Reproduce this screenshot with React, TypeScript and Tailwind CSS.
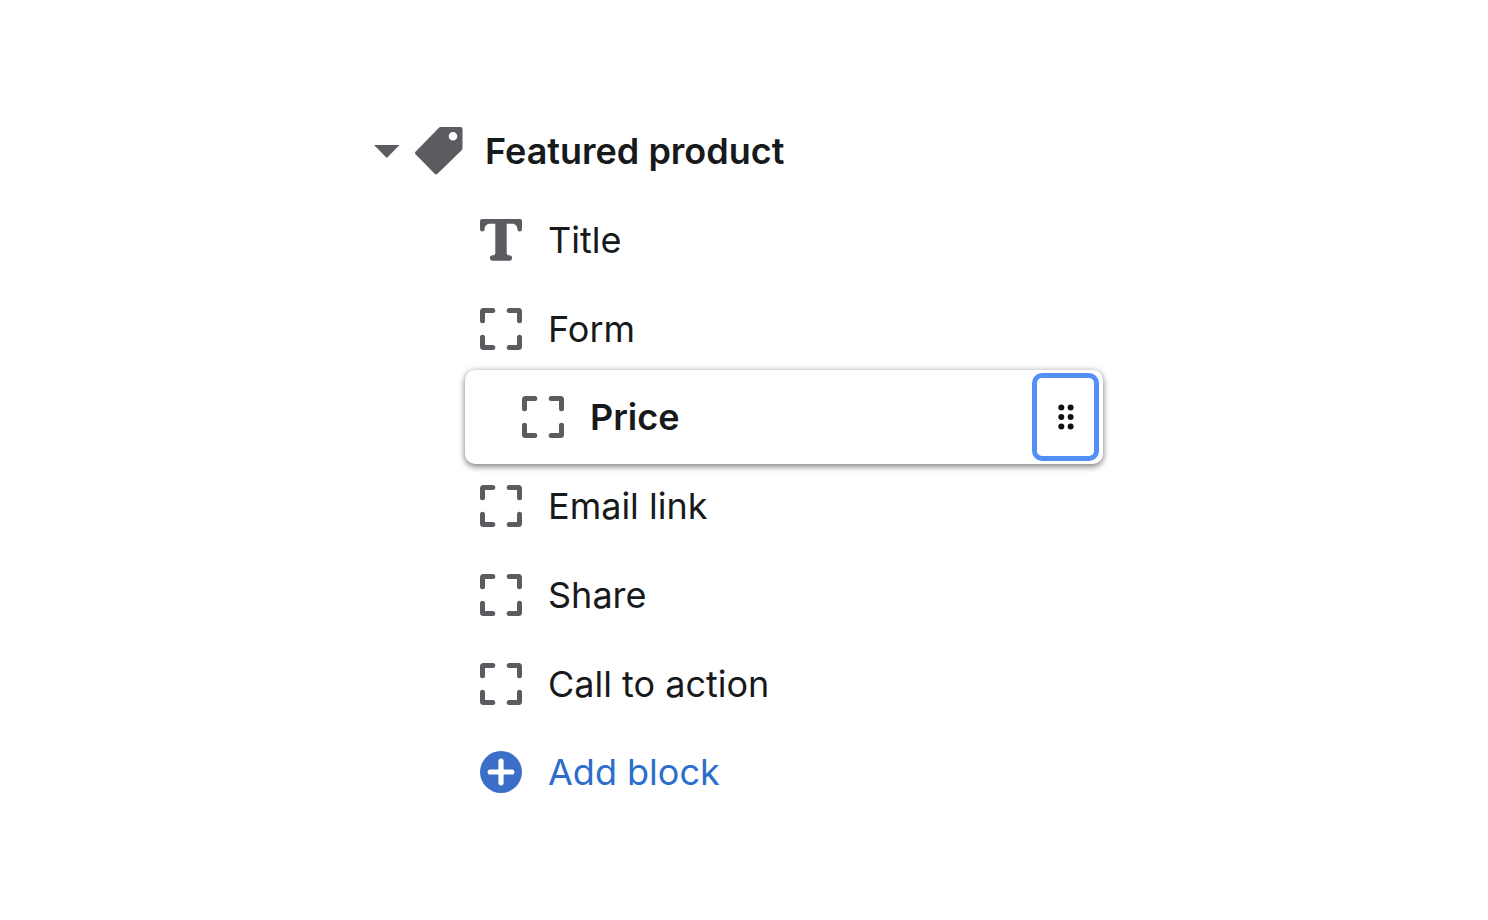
import { useState } from "react";

type Block = {
  label: string;
  icon: "text" | "block";
  selected?: boolean;
};

const blocks: Block[] = [
  { label: "Title", icon: "text" },
  { label: "Form", icon: "block" },
  { label: "Price", icon: "block", selected: true },
  { label: "Email link", icon: "block" },
  { label: "Share", icon: "block" },
  { label: "Call to action", icon: "block" },
];

function CaretIcon({ open }: { open: boolean }) {
  return (
    <svg
      viewBox="0 0 26 14"
      aria-hidden="true"
      className={open ? "w-[26px] h-[14px]" : "w-[26px] h-[14px] -rotate-90"}
    >
      <path d="M0 1h25.5L12.800 14z" fill="#5b5c60" />
    </svg>
  );
}

function TagIcon() {
  return (
    <svg viewBox="0 0 48 48" aria-hidden="true" className="size-12">
      <path
        fillRule="evenodd"
        fill="#5b5c60"
        d="M25.6 0H45.6a1.9 1.9 0 0 1 1.9 1.9V21.600a2 2 0 0 1-.6 1.4L22.5 46.8a2 2 0 0 1-2.8 0L.7 27.4a2 2 0 0 1 0-2.8L24.2.6a2 2 0 0 1 1.4-.6ZM38 5a4.3 4.3 0 1 0 0 8.6A4.3 4.3 0 0 0 38 5Z"
      />
    </svg>
  );
}

function TextIcon() {
  return (
    <svg viewBox="0 0 42 42" aria-hidden="true" className="size-[42px] shrink-0">
      <path
        fill="#5b5c60"
        d="M2 0h38a2 2 0 0 1 2 2v8.200a2.300 2.300 0 0 1-4.600 0C37.200 6.800 35.200 4.800 31.500 4.800H26.700v28.700c0 2 .8 2.800 2.600 2.800a2.700 2.700 0 0 1 0 5.500H12.700a2.700 2.700 0 0 1 0-5.500c1.800 0 2.600-.8 2.600-2.800V4.800h-4.800C6.800 4.800 4.800 6.800 4.600 10.200a2.300 2.300 0 0 1-4.600 0V2a2 2 0 0 1 2-2Z"
      />
    </svg>
  );
}

function BlockIcon() {
  return (
    <svg viewBox="0 0 42 42" aria-hidden="true" className="size-[42px] shrink-0">
      <path
        fill="none"
        stroke="#5b5c60"
        strokeWidth="5"
        strokeLinecap="round"
        d="M2.500 12.800V3.500a1 1 0 0 1 1-1h9.300M29.200 2.500h9.300a1 1 0 0 1 1 1v9.300M39.500 29.200v9.300a1 1 0 0 1-1 1h-9.300M12.800 39.500H3.500a1 1 0 0 1-1-1v-9.300"
      />
    </svg>
  );
}

function AddIcon() {
  return (
    <svg viewBox="0 0 42 42" aria-hidden="true" className="size-[42px] shrink-0">
      <circle cx="21" cy="21" r="21" fill="#3b6ec8" />
      <path
        d="M21 10.200v21.600M10.200 21h21.600"
        stroke="#fff"
        strokeWidth="5.2"
        strokeLinecap="round"
      />
    </svg>
  );
}

function DragIcon() {
  return (
    <svg viewBox="0 0 16 26" aria-hidden="true" className="w-4 h-[26px]">
      <g fill="#111213">
        <circle cx="3.300" cy="3.600" r="3" />
        <circle cx="12.600" cy="3.600" r="3" />
        <circle cx="3.300" cy="13" r="3" />
        <circle cx="12.600" cy="13" r="3" />
        <circle cx="3.300" cy="22.400" r="3" />
        <circle cx="12.600" cy="22.400" r="3" />
      </g>
    </svg>
  );
}

export default function App() {
  const [open, setOpen] = useState(true);

  return (
    <main className="min-h-screen bg-white pt-[106px] text-[36px] leading-[44px] text-[#17191a] font-['Inter',sans-serif]">
      <div className="mx-auto w-full max-w-[740px] pr-[11px]">
        <h2>
          <button
            type="button"
            aria-expanded={open}
            onClick={() => setOpen(!open)}
            className="flex h-[89px] items-center font-semibold"
          >
            <CaretIcon open={open} />
            <span className="ml-[15px] mr-[22px]">
              <TagIcon />
            </span>
            Featured product
          </button>
        </h2>

        {open && (
          <div className="pl-[91px]">
            <ul>
              {blocks.map((block) =>
                block.selected ? (
                  /* Picked-up block, sits slightly over its neighbours */
                  <li
                    key={block.label}
                    className="relative -my-[3px] flex h-[94px] items-center gap-[26px] rounded-[10px] bg-white pl-[57px] pr-1 font-semibold shadow-[0_0_6px_rgba(0,0,0,0.2),0_3px_6px_rgba(0,0,0,0.4)]"
                  >
                    <BlockIcon />
                    <span className="flex-1">{block.label}</span>
                    <button
                      type="button"
                      aria-label={`Move ${block.label}`}
                      className="flex h-[88px] w-[67px] items-center justify-center rounded-[10px] border-[5px] border-[#548ff8]"
                    >
                      <DragIcon />
                    </button>
                  </li>
                ) : (
                  <li key={block.label} className="flex h-[89px] items-center gap-[26px] pl-[15px]">
                    {block.icon === "text" ? <TextIcon /> : <BlockIcon />}
                    <span>{block.label}</span>
                  </li>
                )
              )}
            </ul>
            <button
              type="button"
              className="flex h-[88px] items-center gap-[26px] pl-[15px] text-[#2c6ecb]"
            >
              <AddIcon />
              Add block
            </button>
          </div>
        )}
      </div>
    </main>
  );
}
